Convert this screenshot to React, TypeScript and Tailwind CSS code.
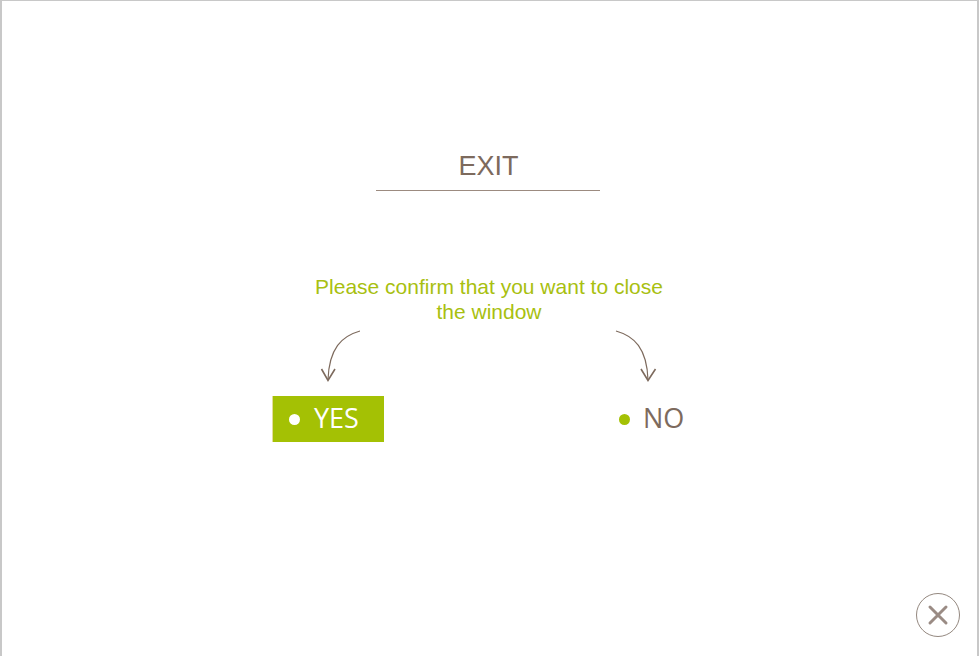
export default function App() {
  return (
    <div className="h-[656px] w-[979px] bg-white border-t border-l-2 border-r-2 border-[#c8c8c8] flex flex-col font-['Liberation_Sans',sans-serif]">
      {/* Title */}
      <div className="mt-[148px] w-[224px] ml-[374px] border-b border-[#9c8b80] h-[42px] text-center text-[27px] leading-[34px] text-[#7d6a5d]">
        <span className="pl-px">EXIT</span>
      </div>

      {/* Message */}
      <p className="mt-[83px] ml-[287px] w-[400px] text-center text-[21px] leading-[25px] text-[#a8c010]">
        Please confirm that you want to close
        <br />
        the window
      </p>

      {/* Arrows */}
      <div className="mt-[6px] ml-[270px] flex gap-[208px] h-[66px]">
        <div className="w-[112px] h-[64px]">
          <svg width="112" height="64" viewBox="0 0 112 64" fill="none">
            <path d="M88 1C70 6 57 18 56 50" stroke="#7d6a5d" strokeWidth="1.200" />
            <path d="M49.500 39L56 50.500L63 39" stroke="#7d6a5d" strokeWidth="1.600" />
          </svg>
        </div>
        <div className="w-[112px] h-[64px]">
          <svg width="112" height="64" viewBox="0 0 112 64" fill="none">
            <path d="M24 1C42 6 55 18 56 50" stroke="#7d6a5d" strokeWidth="1.200" />
            <path d="M49 39L56 50.500L63.500 39" stroke="#7d6a5d" strokeWidth="1.600" />
          </svg>
        </div>
      </div>

      {/* Buttons */}
      <div className="ml-[270px] flex gap-[208px] font-['Open_Sans',sans-serif] text-[27px]">
        <button className="w-[112px] h-[46px] bg-[#a4c104] border-l border-[#e3dd9a] text-white flex items-center pl-[16px] gap-[14px]">
          <span className="w-[11px] h-[11px] rounded-full bg-white" />
          <span className="-mt-[2px]">YES</span>
        </button>
        <button className="w-[112px] h-[46px] text-[#7d6a5d] flex items-center pl-[27px] gap-[13px]">
          <span className="w-[11px] h-[11px] rounded-full bg-[#a4c104]" />
          <span className="-mt-[2px]">NO</span>
        </button>
      </div>

      {/* Close */}
      <div className="mt-auto mb-[19px] mr-[17px] flex justify-end">
        <button className="w-[44px] h-[44px] rounded-full border border-[#94887f] flex items-center justify-center">
          <svg width="24" height="24" viewBox="0 0 24 24" fill="none">
            <path d="M4 4L20 20M20 4L4 20" stroke="#9a8b84" strokeWidth="3" strokeLinecap="round" />
          </svg>
        </button>
      </div>
    </div>
  )
}
